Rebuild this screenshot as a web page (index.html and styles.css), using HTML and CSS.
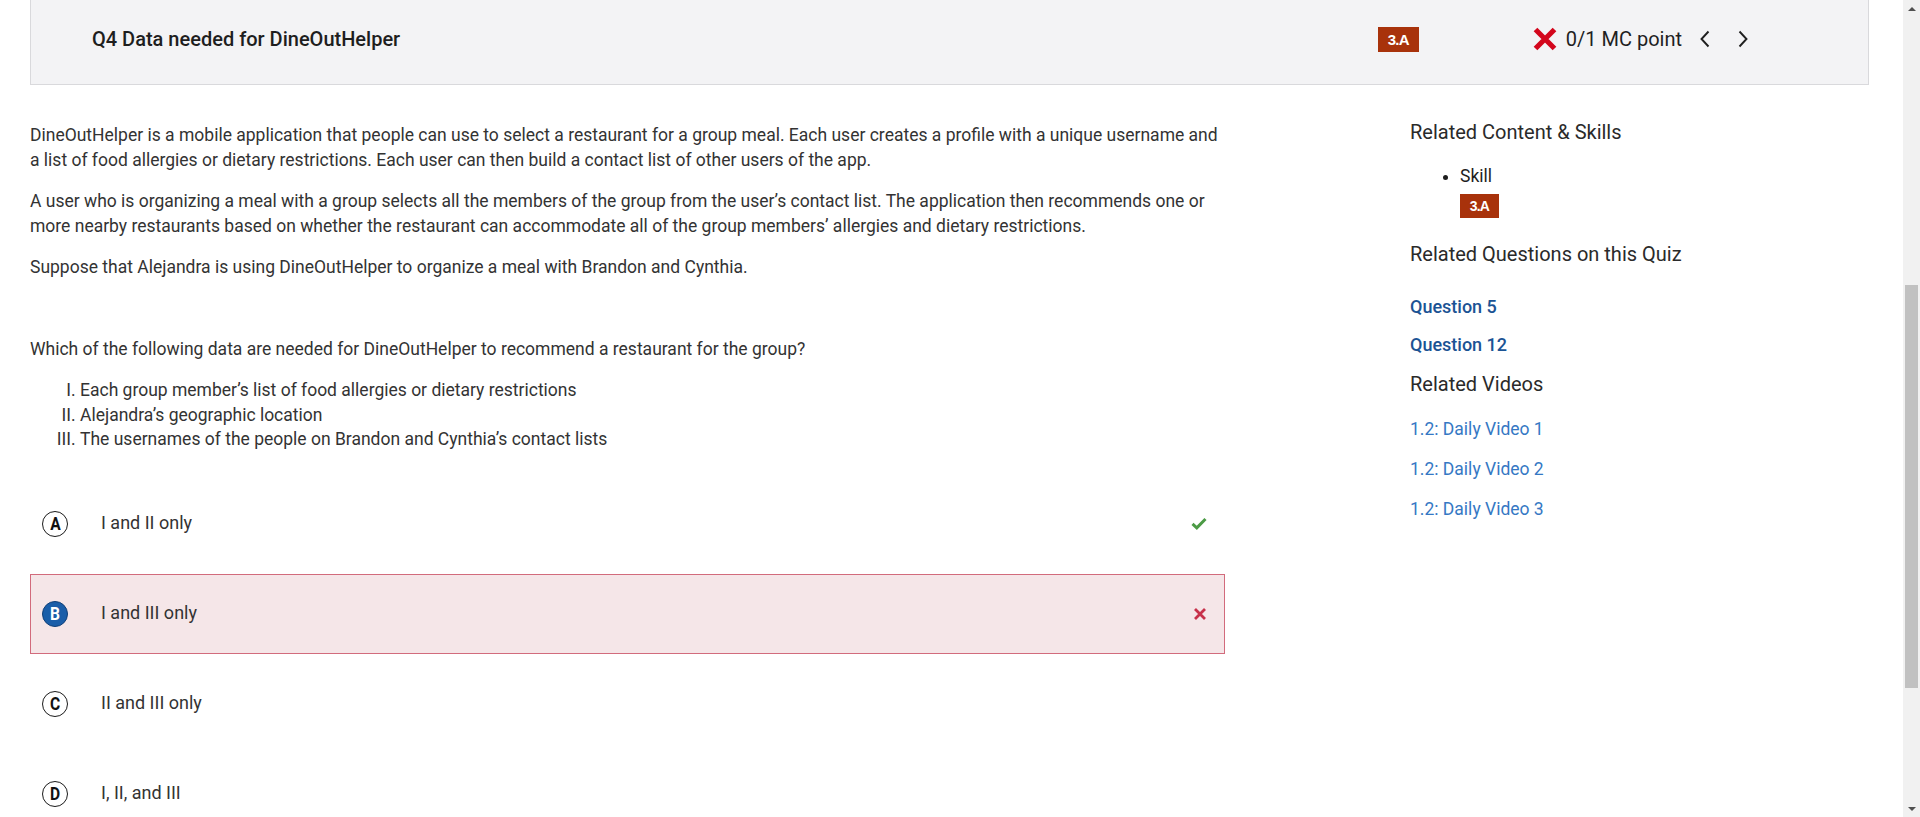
FILE: index.html
```html
<!DOCTYPE html>
<html lang="en">
<head>
<meta charset="utf-8">
<title>Q4 Data needed for DineOutHelper</title>
<link rel="stylesheet" href="styles.css">
</head>
<body>
<div class="page">
  <div class="viewport">
    <header class="qhead">
      <h1 class="qtitle">Q4 Data needed for DineOutHelper</h1>
      <span class="badge">3.A</span>
      <div class="score">
        <svg class="score-x" width="26" height="26" viewBox="0 0 26 26" aria-hidden="true">
          <path d="M3.5 3.5 L22.5 22.5 M22.5 3.5 L3.5 22.5" stroke="#d3061c" stroke-width="5.2" fill="none"/>
        </svg>
        <span class="score-text">0/1 MC point</span>
      </div>
      <div class="pager">
        <span class="pg-btn"><svg width="10" height="18" viewBox="0 0 10 18" aria-hidden="true"><polyline points="8.5,1.5 1.5,9 8.5,16.5" fill="none" stroke="#1f1f1f" stroke-width="1.9"/></svg></span>
        <span class="pg-btn"><svg width="10" height="18" viewBox="0 0 10 18" aria-hidden="true"><polyline points="1.5,1.5 8.5,9 1.5,16.5" fill="none" stroke="#1f1f1f" stroke-width="1.9"/></svg></span>
      </div>
    </header>

    <div class="body">
      <main class="question">
        <p>DineOutHelper is a mobile application that people can use to select a restaurant for a group meal. Each user creates a profile with a unique username and a list of food allergies or dietary restrictions. Each user can then build a contact list of other users of the app.</p>
        <p>A user who is organizing a meal with a group selects all the members of the group from the user’s contact list. The application then recommends one or more nearby restaurants based on whether the restaurant can accommodate all of the group members’ allergies and dietary restrictions.</p>
        <p>Suppose that Alejandra is using DineOutHelper to organize a meal with Brandon and Cynthia.</p>
        <p class="stem">Which of the following data are needed for DineOutHelper to recommend a restaurant for the group?</p>
        <ol class="roman">
          <li>Each group member’s list of food allergies or dietary restrictions</li>
          <li>Alejandra’s geographic location</li>
          <li>The usernames of the people on Brandon and Cynthia’s contact lists</li>
        </ol>

        <div class="options">
          <div class="option">
            <span class="letter"><span class="letter-glyph">A</span></span>
            <span class="opt-text">I and II only</span>
            <svg class="opt-icon" width="16" height="13" viewBox="0 0 16 13" aria-hidden="true"><polyline points="1.5,6.8 5.8,10.8 14.5,2" fill="none" stroke="#4c9b45" stroke-width="3"/></svg>
          </div>
          <div class="option option-wrong">
            <span class="letter letter-selected"><span class="letter-glyph">B</span></span>
            <span class="opt-text">I and III only</span>
            <svg class="opt-icon" width="14" height="14" viewBox="0 0 14 14" aria-hidden="true"><path d="M2 2 L12 12 M12 2 L2 12" fill="none" stroke="#c7314a" stroke-width="2.8"/></svg>
          </div>
          <div class="option">
            <span class="letter"><span class="letter-glyph">C</span></span>
            <span class="opt-text">II and III only</span>
          </div>
          <div class="option">
            <span class="letter"><span class="letter-glyph">D</span></span>
            <span class="opt-text">I, II, and III</span>
          </div>
        </div>
      </main>

      <aside class="related">
        <h2 class="rel-h">Related Content &amp; Skills</h2>
        <ul class="skills">
          <li>Skill
            <span class="badge badge-block">3.A</span>
          </li>
        </ul>
        <h2 class="rel-h">Related Questions on this Quiz</h2>
        <a class="q-link" href="#">Question 5</a>
        <a class="q-link" href="#">Question 12</a>
        <h2 class="rel-h rel-videos">Related Videos</h2>
        <a class="v-link" href="#">1.2: Daily Video 1</a>
        <a class="v-link" href="#">1.2: Daily Video 2</a>
        <a class="v-link" href="#">1.2: Daily Video 3</a>
      </aside>
    </div>
  </div>

  <div class="scrollbar" aria-hidden="true">
    <div class="sb-arrow"><span class="tri-up"></span></div>
    <div class="sb-track"><div class="sb-thumb"></div></div>
    <div class="sb-arrow"><span class="tri-down"></span></div>
  </div>
</div>
</body>
</html>
```

FILE: styles.css
```css
html, body {
  margin: 0;
  padding: 0;
  height: 100%;
  overflow: hidden;
  background: #ffffff;
}

body {
  font-family: Roboto, "Liberation Sans", Arial, sans-serif;
  color: #333333;
  font-size: 17.5px;
}

.page {
  display: flex;
  height: 817px;
}

.viewport {
  flex: 1;
  min-width: 0;
  padding: 0 34px 0 30px;
}

/* ---------- header ---------- */
.qhead {
  display: flex;
  align-items: center;
  box-sizing: border-box;
  height: 85px;
  padding: 0 113px 6px 61px;
  background: #f3f3f5;
  border: 1px solid #d9d9dc;
  border-top: none;
}

.qtitle {
  flex: 1;
  margin: 0;
  font-size: 20px;
  font-weight: 500;
  color: #1e1e1e;
}

.badge {
  display: inline-flex;
  align-items: center;
  justify-content: center;
  width: 41px;
  height: 25px;
  background: #a8320b;
  color: #ffffff;
  font-family: "Liberation Sans", Arial, sans-serif;
  font-weight: 700;
  font-size: 15px;
  letter-spacing: -0.8px;
}

.score {
  display: flex;
  align-items: center;
  margin-left: 113px;
}

.score-x {
  display: block;
  margin-right: 8px;
}

.score-text {
  font-size: 20px;
  color: #1f1f1f;
}

.pager {
  display: flex;
  align-items: center;
  margin-left: 11px;
  gap: 14px;
}

.pg-btn {
  display: flex;
  align-items: center;
  justify-content: center;
  width: 24px;
  height: 24px;
}

/* ---------- body ---------- */
.body {
  display: flex;
  gap: 185px;
}

.question {
  width: 1195px;
  flex: none;
  padding-top: 38px;
  line-height: 24.5px;
}

.question p {
  margin: 0 0 17px;
}

.question .stem {
  margin: 57px 0 0;
}

.roman {
  list-style: upper-roman;
  margin: 17px 0 0;
  padding-left: 50px;
}

.options {
  margin-top: 32px;
}

.option {
  display: flex;
  align-items: center;
  height: 80px;
  box-sizing: border-box;
  margin-bottom: 10px;
  padding: 0 17px 0 11px;
  border: 1px solid transparent;
}

.option-wrong {
  background: #f5e6e8;
  border-color: #d26b7c;
}

.letter {
  display: flex;
  align-items: center;
  justify-content: center;
  width: 26px;
  height: 26px;
  box-sizing: border-box;
  border: 1.5px solid #1a1a1a;
  border-radius: 50%;
  font-family: Roboto, "Liberation Sans", Arial, sans-serif;
  font-weight: 700;
  font-size: 19px;
  line-height: 1;
  color: #111111;
  flex: none;
}

.letter-glyph {
  display: inline-block;
  transform: scaleX(0.82);
}

.letter-selected {
  background: #1a5ea9;
  border-color: #0f3f78;
  color: #ffffff;
}

.opt-text {
  flex: 1;
  margin-left: 33px;
  font-size: 18px;
  color: #333333;
}

.opt-icon {
  display: block;
}

/* ---------- related sidebar ---------- */
.related {
  flex: 1;
  padding-top: 35px;
}

.rel-h {
  margin: 0;
  font-size: 20px;
  font-weight: 400;
  line-height: 24px;
  color: #2a2a2a;
}

.skills {
  margin: 20px 0 24px;
  padding-left: 50px;
  font-size: 17.5px;
  line-height: 24px;
  color: #1e1e1e;
}

.badge-block {
  display: flex;
  margin-top: 6px;
  width: 39px;
  height: 24px;
  font-size: 14px;
}

.q-link {
  display: block;
  line-height: 38px;
  font-size: 18px;
  font-weight: 500;
  color: #1b5394;
  text-decoration: none;
}

.rel-h + .q-link {
  margin-top: 22px;
}

.rel-videos {
  margin-top: 8px;
  margin-bottom: 13px;
}

.v-link {
  display: block;
  line-height: 40px;
  font-size: 17.5px;
  color: #3578c4;
  text-decoration: none;
}

/* ---------- scrollbar ---------- */
.scrollbar {
  width: 17px;
  flex: none;
  display: flex;
  flex-direction: column;
  background: #f1f1f1;
}

.sb-arrow {
  height: 17px;
  display: flex;
  align-items: center;
  justify-content: center;
}

.tri-up {
  width: 0;
  height: 0;
  border-left: 4px solid transparent;
  border-right: 4px solid transparent;
  border-bottom: 4px solid #505050;
}

.tri-down {
  width: 0;
  height: 0;
  border-left: 4px solid transparent;
  border-right: 4px solid transparent;
  border-top: 4px solid #505050;
}

.sb-track {
  flex: 1;
  padding: 0 2px;
}

.sb-thumb {
  margin-top: 268px;
  height: 403px;
  background: #c1c1c1;
}
```
